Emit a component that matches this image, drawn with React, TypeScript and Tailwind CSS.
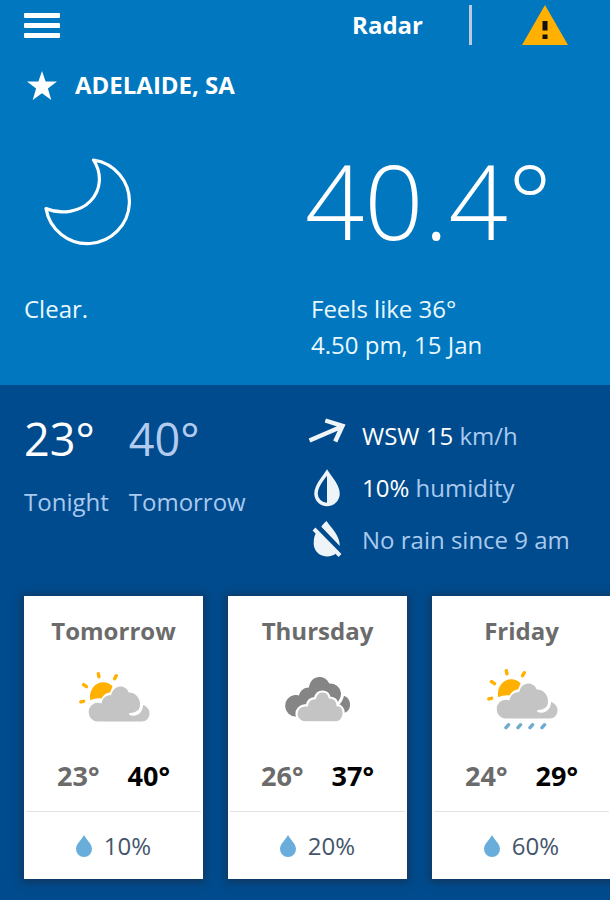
import type { ReactNode } from "react";

type Forecast = { day: string; low: number; high: number; rain: number; icon: ReactNode };

function CloudShape() {
  return (
    <g transform="translate(0 16) scale(1 1.07) translate(0 -16)">
      <path
        d="M19.500 48.700a8.800 8.800 0 0 1 0-17.600c1.600 0 2.700.2 4 .7C24.200 27.300 28 24 33.200 24 34.300 19.400 37.500 16 42.500 16c3.800 0 7 2.200 8.200 5.700A11 11 0 0 1 62 32.500c0 6.300-3.800 10.300-9.500 10.300 6.500 1.800 12.300-2.300 12.600-9.500 3.800 1.300 6.400 4 6.400 7.700 0 4.500-3.300 7.700-7.800 7.700z"
        fill="#c4c4c4"
      />
      <path d="M52.200 41.800c6.300.3 11.300-3.300 11.800-10.300" fill="none" stroke="#fff" strokeWidth="2.200" strokeLinecap="round" />
    </g>
  );
}

function Sun() {
  return (
    <>
      <path d="M12.300 29.800C10.500 22 15.500 12.300 24.500 11.800c3.700-.2 7.300 1.200 10.100 3.900l-2.400 6.100c-4 .6-7 2.800-8.700 6.200-3.800-.6-7.900.3-11.200 1.800z" fill="#ffb000" />
      <path d="M2.800 31.400l2.800-.6M5.500 14.100l3 2.100M20.300 3.200l.6 3.100M38.300 5.200l-1.700 3" stroke="#ffb000" strokeWidth="3.400" strokeLinecap="round" />
    </>
  );
}

function PartlyCloudy() {
  return (
    <svg viewBox="0 0 72 62" className="h-[62px] w-[72px]" aria-hidden="true">
      <g transform="translate(0 2.500)">
        <Sun />
        <CloudShape />
      </g>
    </svg>
  );
}

function Showers() {
  return (
    <svg viewBox="0 0 72 62" className="h-[62px] w-[72px]" aria-hidden="true">
      <g transform="translate(0 -.5)">
        <Sun />
        <CloudShape />
      </g>
      <path d="M20 59.600l2.600-2.900M32 59.600l2.600-2.900M44 59.600l2.600-2.900M56 59.600l2.600-2.900" stroke="#6eabcf" strokeWidth="3.400" strokeLinecap="round" />
    </svg>
  );
}

function Cloudy() {
  return (
    <svg viewBox="0 0 72 62" className="h-[62px] w-[72px]" aria-hidden="true">
      <g transform="translate(-.5 3)">
        <path d="M14 45.500A10.800 10.800 0 0 1 13 24c1.500 0 3 .1 4.400.5 1.400-5 5-8 10-8C28.500 10 32.500 6 38 6c4.500 0 8 2.500 9.600 6.500A11 11 0 0 1 59.500 22c0 3-.8 5.600-2.300 7.600L49 44z" fill="#858585" />
        <path d="M62.500 24.800A9.500 9.500 0 0 1 68.500 34c0 4-2.300 7-6.300 8l-4.700-8c2.500-2.400 4-5.200 5-9.200z" fill="#858585" />
        <path
          d="M24 51.300a8.500 8.500 0 0 1-1-17h2.500c.5-4.200 3.500-7 8-7.200 1-4.200 3.700-6.600 7.500-6.600 3.600 0 6.300 2.300 7.200 6 4.600.2 7.500 3 7.800 7.600 3.700.3 6.200 3.600 6.200 8 0 5.300-3.300 9.200-8 9.200z"
          fill="#c4c4c4"
          stroke="#fff"
          strokeWidth="2.200"
        />
      </g>
    </svg>
  );
}

function Drop() {
  return (
    <svg viewBox="0 0 16 22" className="h-[22px] w-4" aria-hidden="true">
      <path d="M8 0C5.500 4.700 0 9 0 14a8 8 0 0 0 16 0C16 9 10.500 4.700 8 0z" fill="#69aedb" />
    </svg>
  );
}

const forecasts: Forecast[] = [
  { day: "Tomorrow", low: 23, high: 40, rain: 10, icon: <PartlyCloudy /> },
  { day: "Thursday", low: 26, high: 37, rain: 20, icon: <Cloudy /> },
  { day: "Friday", low: 24, high: 29, rain: 60, icon: <Showers /> },
];

function ForecastCard({ day, low, high, rain, icon }: Forecast) {
  return (
    <li className="w-[179px] shrink-0 bg-white text-center shadow-[0_1px_8px_2px_rgba(30,40,60,0.6)]">
      <h2 className="pt-[18px] text-2xl leading-[34px] font-bold text-[#6b6b6b]">{day}</h2>
      <div className="mt-5 flex justify-center">{icon}</div>
      <p className="mt-7 flex justify-center gap-7 text-[27px] leading-9 font-bold">
        <span className="text-[#6b6b6b]">{low}°</span>
        <span className="text-black">{high}°</span>
      </p>
      <p className="mx-0.5 mt-[17px] flex items-center justify-center gap-3 border-t border-[#e3e3e3] pt-4 pb-[15px] text-2xl leading-9 text-[#44566c]">
        <Drop />
        {rain}%
      </p>
    </li>
  );
}

export default function App() {
  return (
    <div className="min-h-screen overflow-hidden bg-[#004b8d] font-['Open_Sans','Noto_Sans',sans-serif] text-2xl text-white">
      <section className="bg-[#0077be] px-6 pb-[22px]">
        <header className="flex h-[50px] items-center justify-between">
          <button type="button" aria-label="Menu" className="flex w-9 flex-col gap-[5px]">
            <span className="h-[5px] w-full rounded-[1px] bg-white" />
            <span className="h-[5px] w-full rounded-[1px] bg-white" />
            <span className="h-[5px] w-full rounded-[1px] bg-white" />
          </button>
          <nav className="flex items-center pr-[18px]">
            <a href="#radar" className="font-bold">Radar</a>
            <span className="ml-[46px] h-10 w-[3px] bg-[#bccbdc]" />
            <button type="button" aria-label="Warnings" className="ml-[50px]">
              <svg viewBox="0 0 46 40" className="h-10 w-[46px]" aria-hidden="true">
                <path d="M23 0L46 40H0z" fill="#ffb000" />
                <path d="M20.500 16h5v9.500h-5zM20.500 29.500h5v4.500h-5z" fill="#111" />
              </svg>
            </button>
          </nav>
        </header>
        <div className="mt-[17px] flex h-9 items-center gap-[18px] pl-[3px]">
          <svg viewBox="0 0 30 29" className="h-[29px] w-[30px]" aria-hidden="true">
            <path d="M15 0l3.600 10.500H30l-9.100 7.100L24.300 29 15 22.200 5.700 29l3.400-11.400L0 10.500h11.400z" fill="#fff" />
          </svg>
          <h1 className="font-bold">ADELAIDE, SA</h1>
        </div>
        <div className="mt-[27px] grid grid-cols-[minmax(0,287fr)_minmax(0,275fr)]">
          <div className="flex h-[140px] items-center pt-1 pl-5">
            <svg viewBox="0 0 88 88" className="h-[88px] w-[88px]" fill="none" stroke="#fff" strokeWidth="3.200" strokeLinejoin="round" role="img" aria-label="Moon">
              <path d="M49.500 2A42 42 0 1 1 2 50.500C17 57 36 54 46.500 43S58.500 16 49.500 2z" />
            </svg>
          </div>
          <p className="-ml-1.5 text-[104px] leading-[140px] font-light">40.4°</p>
          <p className="mt-[21px] leading-9 text-[#eaf7ff]">Clear.</p>
          <p className="mt-[21px] leading-9 text-[#eaf7ff]">
            Feels like 36°
            <br />
            4.50 pm, 15 Jan
          </p>
        </div>
      </section>

      <section className="grid grid-cols-[minmax(0,284fr)_minmax(0,278fr)] px-6 pt-[25px] pb-[30px] text-[#a9c9ee]">
        <dl className="flex gap-5">
          <div className="flex flex-col-reverse justify-end">
            <dt className="mt-4 leading-9">Tonight</dt>
            <dd className="text-[45px] leading-[58px] text-white">23°</dd>
          </div>
          <div className="flex flex-col-reverse justify-end">
            <dt className="mt-4 leading-9">Tomorrow</dt>
            <dd className="text-[45px] leading-[58px] text-[#b3cbee]">40°</dd>
          </div>
        </dl>
        <ul className="text-[#a9c9ee]">
          <li className="flex h-[52px] items-center gap-4">
            <svg viewBox="0 0 38 38" className="h-[38px] w-[38px]" fill="none" stroke="#eef4f8" strokeWidth="4.400" aria-hidden="true">
              <path d="M1.500 23.500L34 9.500M17.300 3.500L34.500 8.800 27.200 24.500" />
            </svg>
            <span><span className="text-white">WSW 15</span> km/h</span>
          </li>
          <li className="flex h-[52px] items-center gap-4">
            <svg viewBox="0 0 38 38" className="h-[38px] w-[38px]" aria-hidden="true">
              <path d="M19 3.500C15 10 8 16 8 24.500a11 11 0 0 0 22 0C30 16 23 10 19 3.500z" fill="none" stroke="#eef4f8" strokeWidth="3.500" />
              <path d="M19 3.500C23 10 30 16 30 24.500a11 11 0 0 1-11 11z" fill="#eef4f8" />
            </svg>
            <span><span className="text-white">10%</span> humidity</span>
          </li>
          <li className="flex h-[52px] items-center gap-4">
            <svg viewBox="0 0 38 38" className="h-[38px] w-[38px]" aria-hidden="true">
              <path d="M18.500 0c-2 1.500-4 4-5.200 5.700L31.800 25C32 14.500 23 6.500 18.500 0zM8 12C6.500 14.500 5.800 17 5.800 20.500a13 13 0 0 0 13 15c4 0 7.500-1.200 9.700-3.700z" fill="#eef4f8" />
              <path d="M6 8L32 34.500" stroke="#eef4f8" strokeWidth="4" />
            </svg>
            <span className="whitespace-nowrap">No rain since 9 am</span>
          </li>
        </ul>
      </section>

      <ul className="flex gap-[25px] pb-[21px] pl-6">
        {forecasts.map((f) => (
          <ForecastCard key={f.day} {...f} />
        ))}
      </ul>
    </div>
  );
}
